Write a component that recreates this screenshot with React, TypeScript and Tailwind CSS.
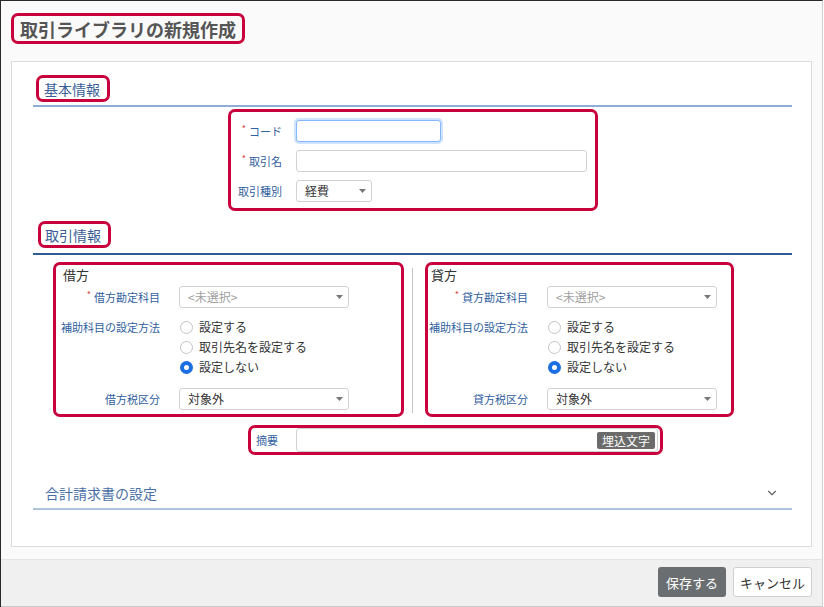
import { ChevronDown } from 'lucide-react';

const font = { fontFamily: '"Noto Sans CJK JP", "Noto Sans", sans-serif' };

function Caret() {
  return (
    <svg width="7" height="4" viewBox="0 0 7 4" className="shrink-0">
      <polygon points="0,0 7,0 3.5,4" fill="#777" />
    </svg>
  );
}

function Select({ value, placeholder, className }: { value: string; placeholder?: boolean; className: string }) {
  return (
    <div
      className={`h-[22px] flex items-center justify-between pl-[8px] pr-[5px] bg-white border border-[#d2d2d2] rounded-[3px] ${className}`}
    >
      <span className={`text-[12px] leading-none ${placeholder ? 'text-[#a0a0a0]' : 'text-[#333]'}`}>{value}</span>
      <Caret />
    </div>
  );
}

function Radio({ label, checked }: { label: string; checked?: boolean }) {
  return (
    <div className="h-[20px] flex items-center gap-[6px]">
      {checked ? (
        <span className="w-[13px] h-[13px] rounded-full border-[4px] border-[#1b6fe0] bg-white" />
      ) : (
        <span className="w-[13px] h-[13px] rounded-full border border-[#c4c4c4] bg-white" />
      )}
      <span className="text-[12px] leading-none text-[#333]">{label}</span>
    </div>
  );
}

function Label({ text, required, className }: { text: string; required?: boolean; className: string }) {
  return (
    <div className={`shrink-0 flex justify-end whitespace-nowrap text-[11px] leading-none text-[#30609e] ${className}`}>
      {required && <span className="text-[#e03c3c] text-[9px] mr-[3px] -mt-[2px]">*</span>}
      <span>{text}</span>
    </div>
  );
}

function SectionTitle({ text, className }: { text: string; className: string }) {
  return (
    <div className={`flex w-fit h-[27px] items-center border-[3px] border-[#c8003c] rounded-[7px] pr-[7px] ${className}`}>
      <span className="text-[14px] leading-none text-[#3a5f96]">{text}</span>
    </div>
  );
}

function SidePanel({ title, prefix, boxClass, padClass }: { title: string; prefix: string; boxClass: string; padClass: string }) {
  return (
    <div className={`h-[155px] border-[3px] border-[#c8003c] rounded-[7px] pt-[1px] ${padClass} ${boxClass}`}>
      <div className="text-[13px] leading-[18px] text-[#333]">{title}</div>
      <div className="mt-[2px] flex items-center">
        <Label text={`${prefix}勘定科目`} required className="w-[97px]" />
        <Select value="<未選択>" placeholder className="ml-[19px] w-[170px]" />
      </div>
      <div className="mt-[9px] flex">
        <Label text="補助科目の設定方法" className="w-[97px] pt-[5px]" />
        <div className="ml-[20px] flex flex-col">
          <Radio label="設定する" />
          <Radio label="取引先名を設定する" />
          <Radio label="設定しない" checked />
        </div>
      </div>
      <div className="mt-[11px] flex items-center">
        <Label text={`${prefix}税区分`} className="w-[97px]" />
        <Select value="対象外" className="ml-[19px] w-[170px]" />
      </div>
    </div>
  );
}

export default function App() {
  return (
    <div
      style={font}
      className="w-[823px] h-[607px] flex flex-col bg-[#fafafa] border-t border-l border-[#2a2a2a] border-r-[1px] border-r-[#d0d0d0] overflow-hidden"
    >
      {/* Title */}
      <div className="pt-[12px] pl-[10px]">
        <div className="flex w-fit h-[31px] items-center border-[3px] border-[#c8003c] rounded-[7px] px-[6px]">
          <h1 className="text-[18px] leading-none font-bold text-[#555]">取引ライブラリの新規作成</h1>
        </div>
      </div>

      {/* Panel */}
      <div className="mt-[17px] ml-[10px] mr-[10px] h-[486px] bg-white border border-[#dcdcdc] pl-[21px] pr-[19px] pt-[13px]">
        {/* 基本情報 */}
        <SectionTitle text="基本情報" className="ml-[3px] pl-[5px]" />
        <div className="mt-[3px] h-[2px] bg-[#8eaed6]" />

        <div className="mt-[2px] ml-[195px] w-[370px] h-[102px] border-[3px] border-[#c8003c] rounded-[7px] pt-[8px]">
          <div className="flex items-center h-[22px]">
            <Label text="コード" required className="w-[51px]" />
            <div className="ml-[14px] w-[145px] h-[22px] rounded-[3px] border border-[#86b7fe] shadow-[0_0_0_2px_rgba(13,110,253,0.2)] bg-white" />
          </div>
          <div className="mt-[8px] flex items-center h-[22px]">
            <Label text="取引名" required className="w-[51px]" />
            <div className="ml-[14px] w-[291px] h-[22px] rounded-[3px] border border-[#d2d2d2] bg-white" />
          </div>
          <div className="mt-[8px] flex items-center h-[22px]">
            <Label text="取引種別" className="w-[51px]" />
            <Select value="経費" className="ml-[14px] w-[76px]" />
          </div>
        </div>

        {/* 取引情報 */}
        <SectionTitle text="取引情報" className="mt-[10px] ml-[5px] pl-[4px]" />
        <div className="mt-[5px] h-[2px] bg-[#2f5a93]" />

        <div className="mt-[7px] flex items-start">
          <SidePanel title="借方" prefix="借方" boxClass="ml-[20px] w-[351px]" padClass="pl-[7px]" />
          <div className="ml-[8px] mt-[6px] w-px h-[145px] bg-[#c4c4c4]" />
          <SidePanel title="貸方" prefix="貸方" boxClass="ml-[12px] w-[309px]" padClass="pl-[3px]" />
        </div>

        {/* 摘要 */}
        <div className="mt-[8px] ml-[215px] w-[415px] h-[30px] border-[3px] border-[#c8003c] rounded-[7px] flex items-center pl-[5px] pr-[2px]">
          <span className="w-[40px] text-[11px] leading-none text-[#30609e]">摘要</span>
          <div className="w-[362px] h-[24px] border border-[#d2d2d2] rounded-[3px] bg-white flex items-center justify-end pr-[2px]">
            <span className="h-[17px] px-[5px] bg-[#6b6b6b] rounded-[2px] text-[12px] leading-[17px] text-white">埋込文字</span>
          </div>
        </div>

        {/* 合計請求書の設定 */}
        <div className="mt-[23px] h-[30px] flex items-center justify-between pl-[12px] pr-[13px]">
          <span className="text-[14px] leading-none text-[#4a6fa6]">合計請求書の設定</span>
          <ChevronDown size={14} strokeWidth={2} className="text-[#666]" />
        </div>
        <div className="h-[2px] bg-[#afc3dd]" />
      </div>

      {/* Footer */}
      <div className="mt-[12px] flex-1 bg-[#f0f0f0] border-t border-[#e4e4e4] border-b border-b-[#c8c8c8] flex justify-end items-start pt-[7px] pr-[10px] gap-[7px]">
        <button className="w-[68px] h-[30px] rounded-[3px] bg-[#6b6e70] text-white text-[13px] leading-none">保存する</button>
        <button className="w-[79px] h-[30px] rounded-[3px] bg-white border border-[#cfcfcf] text-[#333] text-[13px] leading-none">キャンセル</button>
      </div>
    </div>
  );
}
